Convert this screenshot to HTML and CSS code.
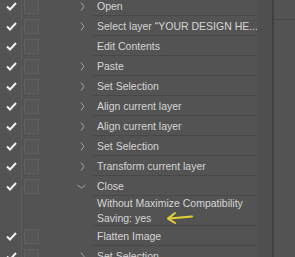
FILE: index.html
```html
<!DOCTYPE html>
<html lang="en">
    <head>
        <meta charset="UTF-8" />
        <meta name="viewport" content="width=device-width, initial-scale=1.0" />
        <title>Actions</title>
        <link rel="stylesheet" href="styles.css">
    </head>
    <body>
        <div class="panel">
            <div class="actions">
                <div class="row"><span class="check"><svg width="11" height="9" viewBox="0 0 11 9"><path d="M1 4.5 L4 7.5 L10 1" /></svg></span><span class="dlg"><i></i></span><span class="arrow"><svg width="5" height="9" viewBox="0 0 5 9"><path d="M1 0.5 L4 4.5 L1 8.5" /></svg></span><span class="name">Open</span></div>
                <div class="row"><span class="check"><svg width="11" height="9" viewBox="0 0 11 9"><path d="M1 4.5 L4 7.5 L10 1" /></svg></span><span class="dlg"><i></i></span><span class="arrow"><svg width="5" height="9" viewBox="0 0 5 9"><path d="M1 0.5 L4 4.5 L1 8.5" /></svg></span><span class="name">Select layer “YOUR DESIGN HE...</span></div>
                <div class="row"><span class="check"><svg width="11" height="9" viewBox="0 0 11 9"><path d="M1 4.5 L4 7.5 L10 1" /></svg></span><span class="dlg"><i></i></span><span class="arrow"></span><span class="name">Edit Contents</span></div>
                <div class="row"><span class="check"><svg width="11" height="9" viewBox="0 0 11 9"><path d="M1 4.5 L4 7.5 L10 1" /></svg></span><span class="dlg"><i></i></span><span class="arrow"><svg width="5" height="9" viewBox="0 0 5 9"><path d="M1 0.5 L4 4.5 L1 8.5" /></svg></span><span class="name">Paste</span></div>
                <div class="row"><span class="check"><svg width="11" height="9" viewBox="0 0 11 9"><path d="M1 4.5 L4 7.5 L10 1" /></svg></span><span class="dlg"><i></i></span><span class="arrow"><svg width="5" height="9" viewBox="0 0 5 9"><path d="M1 0.5 L4 4.5 L1 8.5" /></svg></span><span class="name">Set Selection</span></div>
                <div class="row"><span class="check"><svg width="11" height="9" viewBox="0 0 11 9"><path d="M1 4.5 L4 7.5 L10 1" /></svg></span><span class="dlg"><i></i></span><span class="arrow"><svg width="5" height="9" viewBox="0 0 5 9"><path d="M1 0.5 L4 4.5 L1 8.5" /></svg></span><span class="name">Align current layer</span></div>
                <div class="row"><span class="check"><svg width="11" height="9" viewBox="0 0 11 9"><path d="M1 4.5 L4 7.5 L10 1" /></svg></span><span class="dlg"><i></i></span><span class="arrow"><svg width="5" height="9" viewBox="0 0 5 9"><path d="M1 0.5 L4 4.5 L1 8.5" /></svg></span><span class="name">Align current layer</span></div>
                <div class="row"><span class="check"><svg width="11" height="9" viewBox="0 0 11 9"><path d="M1 4.5 L4 7.5 L10 1" /></svg></span><span class="dlg"><i></i></span><span class="arrow"><svg width="5" height="9" viewBox="0 0 5 9"><path d="M1 0.5 L4 4.5 L1 8.5" /></svg></span><span class="name">Set Selection</span></div>
                <div class="row"><span class="check"><svg width="11" height="9" viewBox="0 0 11 9"><path d="M1 4.5 L4 7.5 L10 1" /></svg></span><span class="dlg"><i></i></span><span class="arrow"><svg width="5" height="9" viewBox="0 0 5 9"><path d="M1 0.5 L4 4.5 L1 8.5" /></svg></span><span class="name">Transform current layer</span></div>
                <div class="row"><span class="check"><svg width="11" height="9" viewBox="0 0 11 9"><path d="M1 4.5 L4 7.5 L10 1" /></svg></span><span class="dlg"><i></i></span><span class="arrow down"><svg width="9" height="5" viewBox="0 0 9 5"><path d="M0.5 1 L4.5 4 L8.5 1" /></svg></span><span class="name">Close</span></div>
                <div class="row detail">
                    <span class="check"></span><span class="dlg"></span><span class="arrow"></span>
                    <span class="name">
                        <span class="line">Without Maximize Compatibility</span>
                        <span class="line">Saving: yes
                            <svg class="pointer" width="30" height="14" viewBox="0 0 30 14">
                                <path d="M27 5.5 L4 7.5" stroke="#e3cf3a" stroke-width="2" fill="none" stroke-linecap="round"/>
                                <path d="M10 2 L3 7.6 L10 12" stroke="#e3cf3a" stroke-width="2" fill="none" stroke-linecap="round" stroke-linejoin="round"/>
                            </svg>
                        </span>
                    </span>
                </div>
                <div class="row"><span class="check"><svg width="11" height="9" viewBox="0 0 11 9"><path d="M1 4.5 L4 7.5 L10 1" /></svg></span><span class="dlg"><i></i></span><span class="arrow"></span><span class="name">Flatten Image</span></div>
                <div class="row"><span class="check"><svg width="11" height="9" viewBox="0 0 11 9"><path d="M1 4.5 L4 7.5 L10 1" /></svg></span><span class="dlg"><i></i></span><span class="arrow"><svg width="5" height="9" viewBox="0 0 5 9"><path d="M1 0.5 L4 4.5 L1 8.5" /></svg></span><span class="name">Set Selection</span></div>
            </div>
            <div class="track"></div>
            <div class="side"><div class="side-head"></div></div>
        </div>
    </body>
</html>
```

FILE: styles.css
```css
* {
    margin: 0;
    padding: 0;
    box-sizing: border-box;
}
body {
    background-color: #535353;
    overflow: hidden;
    font-family: "Liberation Sans", Arial, sans-serif;
    font-size: 10px;
    color: #d6d6d6;
}
.panel {
    display: flex;
    height: 257px;
}
.actions {
    width: 257px;
    flex-shrink: 0;
    margin-top: -4px;
}
.row {
    display: flex;
    height: 20px;
}
.check {
    width: 22px;
    flex-shrink: 0;
    border-right: 1px solid #5d5d5d;
    display: flex;
    align-items: center;
    padding-left: 6px;
}
.check path {
    fill: none;
    stroke: #eeeeee;
    stroke-width: 2;
}
.dlg {
    width: 18px;
    flex-shrink: 0;
    display: flex;
    align-items: center;
    padding-left: 2px;
}
.dlg i {
    width: 15px;
    height: 15px;
    border: 1px solid #5f5f5f;
    background-color: #565656;
}
.arrow {
    width: 52px;
    flex-shrink: 0;
    display: flex;
    align-items: center;
    padding-left: 40px;
}
.arrow.down {
    padding-left: 37px;
}
.arrow path {
    fill: none;
    stroke: #a4a4a4;
    stroke-width: 1;
}
.name {
    flex: 1;
    min-width: 0;
    display: flex;
    align-items: center;
    padding: 1px 0 0 5px;
    border-bottom: 1px solid #484848;
    white-space: nowrap;
    overflow: hidden;
    font-size: 10.5px;
}
.detail {
    height: 30px;
}
.detail .name {
    flex-direction: column;
    align-items: flex-start;
    justify-content: center;
    padding-top: 0;
}
.line {
    display: flex;
    align-items: center;
    height: 15px;
}
.pointer {
    margin-left: 14px;
    margin-top: 1px;
}
.track {
    width: 15px;
    flex-shrink: 0;
    background-color: #4f4f4f;
}
.side {
    flex: 1;
    border-left: 2px solid #3f3f3f;
}
.side-head {
    height: 20px;
    border-bottom: 1px solid #474747;
}
```
